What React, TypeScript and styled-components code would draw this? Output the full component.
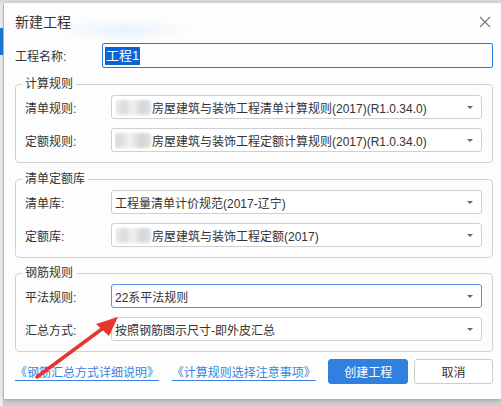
import React from "react";
import styled, { createGlobalStyle } from "styled-components";

const Global = createGlobalStyle`
  html, body { margin: 0; padding: 0; background: #d4d4d4; }
  body { font-family: "Liberation Sans", "Noto Sans CJK SC", "Microsoft YaHei", sans-serif; }
  * { box-sizing: border-box; }
`;

const Page = styled.div`
  position: relative;
  width: 501px;
  height: 406px;
  display: flex;
  padding-top: 3px;
  background: linear-gradient(#dcdcdc 0, #dcdcdc 3px, #cfcfcf 3px);
  overflow: hidden;
`;

const SideStrip = styled.div`
  width: 4px;
  flex: none;
  background: #ececec;
  border-right: 1px solid #c8c8c8;
  display: flex;
  flex-direction: column;
`;

const SideChip = styled.div`
  margin-top: 25px;
  height: 27px;
  width: 3px;
  background: #1b78d6;
`;

const Dialog = styled.div`
  width: 497px;
  height: 396px;
  background: #fdfdfd;
  box-shadow: 0 1px 4px rgba(0, 0, 0, 0.25);
  display: flex;
  flex-direction: column;
  color: #333;
`;

const Header = styled.div`
  height: 38px;
  display: flex;
  align-items: center;
  justify-content: space-between;
  padding: 0 10px 0 11px;
  font-size: 14px;
  background: radial-gradient(ellipse 70px 12px at 120px 27px, rgba(215, 233, 248, 0.55), rgba(255,255,255,0) 100%);
`;

const Title = styled.span`
  line-height: 20px;
`;

const Close = styled.svg`
  width: 12px;
  height: 12px;
`;

const Body = styled.div`
  padding: 2px 8px 0 11px;
  display: flex;
  flex-direction: column;
`;

const Row = styled.div`
  display: flex;
  align-items: center;
`;

const Label = styled.div<{ $w: number }>`
  width: ${(p) => p.$w}px;
  flex: none;
  font-size: 12px;
  color: #333;
  white-space: nowrap;
`;

const NameInput = styled.div`
  width: 391px;
  height: 25px;
  border: 1px solid #2f7bd9;
  border-radius: 2px;
  display: flex;
  align-items: center;
  padding-left: 2px;
  font-size: 13px;
`;

const Selected = styled.span`
  background: #0a64d2;
  color: #fff;
  line-height: 18px;
  padding: 0 1px;
`;

const Group = styled.fieldset<{ $mt: number }>`
  margin: ${(p) => p.$mt}px 0 0 0;
  border: 1px solid #d2d2d2;
  border-radius: 4px;
  padding: 2px 10px 10px 9px;
  display: flex;
  flex-direction: column;
  gap: 9px;
`;

const Legend = styled.legend`
  font-size: 12px;
  line-height: 18px;
  padding: 0 3px;
  margin-left: -3px;
  color: #333;
`;

const Select = styled.div<{ $focus?: boolean }>`
  width: 371px;
  height: 24px;
  border: 1px solid ${(p) => (p.$focus ? "#5b8fe0" : "#cfcfcf")};
  border-radius: 3px;
  background: #fff;
  display: flex;
  align-items: center;
  padding: 0 0 0 3px;
  font-size: 12px;
  color: #333;
  white-space: nowrap;
`;

const SelectText = styled.span`
  flex: 1;
  display: flex;
  align-items: center;
  overflow: hidden;
`;

const Caret = styled.span`
  width: 0;
  height: 0;
  border-left: 3px solid transparent;
  border-right: 3px solid transparent;
  border-top: 3px solid #666;
  margin: 1px 8px 0 8px;
`;

const Mask = styled.span<{ $w: number; $ml?: number }>`
  display: inline-block;
  width: ${(p) => p.$w}px;
  height: 15px;
  margin-left: ${(p) => p.$ml ?? 0}px;
  margin-right: 1px;
  background: linear-gradient(90deg, #ededed 0%, #dadada 25%, #f2f2f2 50%, #d4d4d4 75%, #e2e2e2 100%);
  filter: blur(1.5px);
  border-radius: 4px;
`;

const Footer = styled.div`
  margin-top: 7px;
  height: 25px;
  display: flex;
  align-items: center;
`;

const Link = styled.a`
  font-size: 12px;
  color: #3b82e0;
  text-decoration: underline;
  text-underline-offset: 3px;
  margin-right: 13px;
  cursor: pointer;
`;

const Spacer = styled.div`
  flex: 1;
`;

const Button = styled.button<{ $primary?: boolean }>`
  height: 25px;
  width: ${(p) => (p.$primary ? 80 : 79)}px;
  margin-left: ${(p) => (p.$primary ? 0 : 6)}px;
  border-radius: 3px;
  font-family: inherit;
  font-size: 12px;
  padding: 0;
  border: 1px solid ${(p) => (p.$primary ? "#2f80e0" : "#cccccc")};
  background: ${(p) => (p.$primary ? "#2f80e0" : "#fff")};
  color: ${(p) => (p.$primary ? "#fff" : "#333")};
`;

const Arrow = styled.svg`
  position: absolute;
  left: 0;
  top: 0;
  width: 501px;
  height: 406px;
  pointer-events: none;
`;

export default function App() {
  return (
    <>
      <Global />
      <Page>
        <SideStrip>
          <SideChip />
        </SideStrip>
        <Dialog>
          <Header>
            <Title>新建工程</Title>
            <Close viewBox="0 0 12 12">
              <path d="M1 1L11 11M11 1L1 11" stroke="#7a7a7a" strokeWidth="1.2" fill="none" />
            </Close>
          </Header>
          <Body>
            <Row>
              <Label $w={87}>工程名称:</Label>
              <NameInput>
                <Selected>工程1</Selected>
              </NameInput>
            </Row>

            <Group $mt={7}>
              <Legend>计算规则</Legend>
              <Row>
                <Label $w={86}>清单规则:</Label>
                <Select>
                  <SelectText>
                    <Mask $w={36} />房屋建筑与装饰工程清单计算规则(2017)(R1.0.34.0)
                  </SelectText>
                  <Caret />
                </Select>
              </Row>
              <Row>
                <Label $w={86}>定额规则:</Label>
                <Select>
                  <SelectText>
                    <Mask $w={42} $ml={-6} />房屋建筑与装饰工程定额计算规则(2017)(R1.0.34.0)
                  </SelectText>
                  <Caret />
                </Select>
              </Row>
            </Group>

            <Group $mt={7}>
              <Legend>清单定额库</Legend>
              <Row>
                <Label $w={86}>清单库:</Label>
                <Select>
                  <SelectText>工程量清单计价规范(2017-辽宁)</SelectText>
                  <Caret />
                </Select>
              </Row>
              <Row>
                <Label $w={86}>定额库:</Label>
                <Select>
                  <SelectText>
                    <Mask $w={36} />房屋建筑与装饰工程定额(2017)
                  </SelectText>
                  <Caret />
                </Select>
              </Row>
            </Group>

            <Group $mt={6}>
              <Legend>钢筋规则</Legend>
              <Row>
                <Label $w={86}>平法规则:</Label>
                <Select $focus>
                  <SelectText>22系平法规则</SelectText>
                  <Caret />
                </Select>
              </Row>
              <Row>
                <Label $w={86}>汇总方式:</Label>
                <Select>
                  <SelectText>按照钢筋图示尺寸-即外皮汇总</SelectText>
                  <Caret />
                </Select>
              </Row>
            </Group>

            <Footer>
              <Link>《钢筋汇总方式详细说明》</Link>
              <Link>《计算规则选择注意事项》</Link>
              <Spacer />
              <Button $primary>创建工程</Button>
              <Button>取消</Button>
            </Footer>
          </Body>
        </Dialog>
        <Arrow viewBox="0 0 501 406">
          <line x1="37" y1="377" x2="106" y2="326" stroke="#e8352d" strokeWidth="3.5" strokeLinecap="round" />
          <polygon points="118,317 96,324 109,336" fill="#e8352d" />
        </Arrow>
      </Page>
    </>
  );
}
